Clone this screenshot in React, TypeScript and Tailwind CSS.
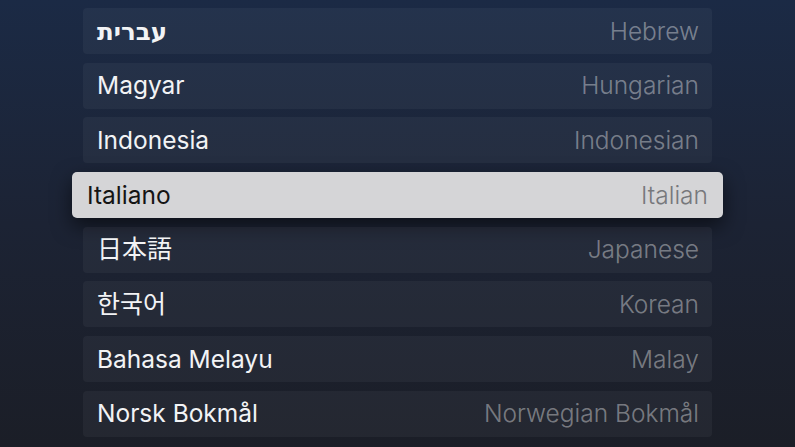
const languages = [
  { native: 'עברית', english: 'Hebrew', nativeClass: 'font-bold' },
  { native: 'Magyar', english: 'Hungarian' },
  { native: 'Indonesia', english: 'Indonesian' },
  { native: 'Italiano', english: 'Italian', selected: true },
  { native: '日本語', english: 'Japanese', nativeClass: 'text-[25px]' },
  { native: '한국어', english: 'Korean', nativeClass: 'text-[25px]' },
  { native: 'Bahasa Melayu', english: 'Malay' },
  { native: 'Norsk Bokmål', english: 'Norwegian Bokmål' },
]

export default function App() {
  return (
    <div
      className="w-[795px] h-[447px] overflow-hidden bg-gradient-to-b from-[#1b2a45] via-[#1c2334] to-[#1b1e27] pt-[8px]"
      style={{ fontFamily: 'Inter, "Noto Sans CJK JP", "Noto Sans CJK KR", "DejaVu Sans", sans-serif' }}
    >
      <div className="mx-[83px] flex flex-col gap-[8.7px]">
        {languages.map((lang) =>
          lang.selected ? (
            <div
              key={lang.english}
              className="-mx-[11px] h-[46px] flex items-center justify-between rounded-[5px] bg-[#d5d5d7] pl-[15px] pr-[15px] shadow-[0_8px_20px_rgba(0,0,0,0.55)]"
            >
              <span className="text-[24.5px] text-[#141414]">{lang.native}</span>
              <span className="text-[24.5px] font-light text-[#77787c]">{lang.english}</span>
            </div>
          ) : (
            <div
              key={lang.english}
              className="h-[46px] flex items-center justify-between rounded-[4px] bg-white/[0.045] pl-[14px] pr-[13px]"
            >
              <span className={`text-[24.5px] text-[#f2f3f5] ${lang.nativeClass ?? ''}`}>{lang.native}</span>
              <span className="text-[24.5px] font-light text-white/40">{lang.english}</span>
            </div>
          )
        )}
      </div>
    </div>
  )
}
